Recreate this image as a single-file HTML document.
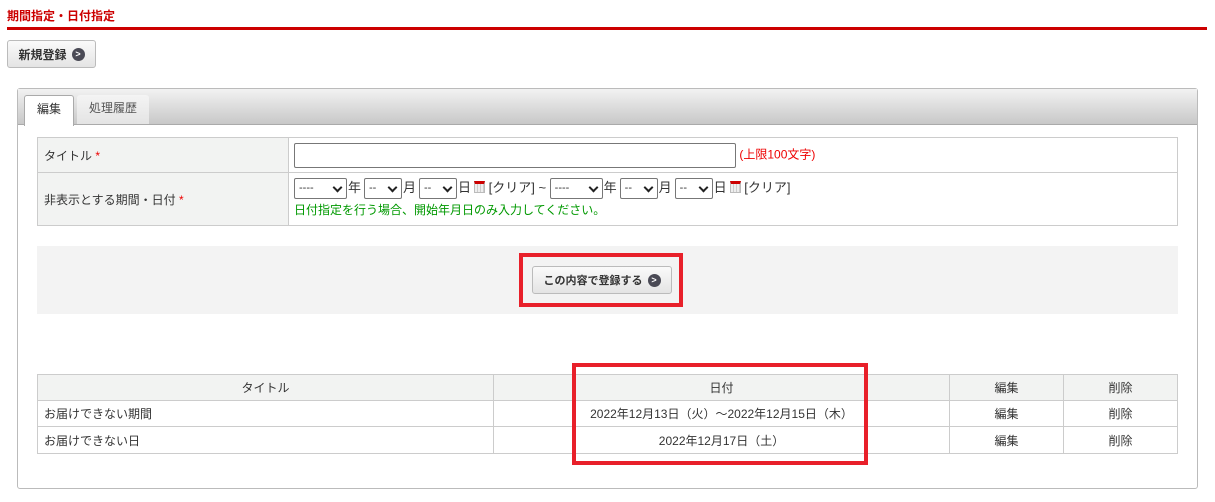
<!DOCTYPE html><html><head><meta charset="utf-8"><style>
body{margin:0;width:1215px;height:502px;background:#fff;font-family:"Liberation Sans","Noto Sans CJK JP",sans-serif;font-size:12px;color:#333;position:relative;overflow:hidden}
.a{position:absolute;box-sizing:border-box}
.btn{border:1px solid #bbb;border-radius:3px;background:linear-gradient(#fafafa,#e4e4e4);font-weight:bold;font-size:12px;color:#333;display:flex;align-items:center;justify-content:center;gap:5px}
.ic{width:13px;height:13px;border-radius:50%;background:#4a4a55;color:#fff;font-size:9px;line-height:13px;text-align:center}
table{border-collapse:collapse;position:absolute}
td{border:1px solid #ccc;padding:0 6px}
.sel{display:inline-block;box-sizing:border-box;height:21px;border:1px solid #777;border-radius:2px;vertical-align:middle;font-size:11px;line-height:19px;padding-left:4px;position:relative;background:#fff}
.sel:after{content:"";position:absolute;right:5px;top:5px;width:5px;height:5px;border-right:2px solid #222;border-bottom:2px solid #222;transform:rotate(45deg)}
.cal{display:inline-block;width:11px;height:12px;border:1px solid #bbb;border-top:3px solid #c00;box-sizing:border-box;background:repeating-linear-gradient(90deg,#eee 0 2px,#ccc 2px 3px);vertical-align:-1px}
.star{color:#e00}
.dt{font-size:13px}
.dt .sel{margin-right:1px}
.dt .u{display:inline-block;width:16px}
</style></head><body>
<div class="a" style="left:7px;top:7px;color:#c00;font-weight:bold;font-size:12px">期間指定・日付指定</div>
<div class="a" style="left:7px;top:27px;width:1200px;height:3px;background:#c00"></div>
<div class="a btn" style="left:7px;top:40px;width:89px;height:28px">新規登録 <span class="ic">&gt;</span></div>
<div class="a" style="left:17px;top:88px;width:1181px;height:401px;border:1px solid #bbb;border-radius:3px"></div>
<div class="a" style="left:18px;top:89px;width:1179px;height:36px;background:linear-gradient(#f2f2f2,#c8c8c8);border-bottom:1px solid #aaa"></div>
<div class="a" style="left:24px;top:95px;width:50px;height:31px;background:#fff;border:1px solid #aaa;border-bottom:none;border-radius:3px 3px 0 0;text-align:center;line-height:26px">編集</div>
<div class="a" style="left:77px;top:95px;width:72px;height:29px;background:linear-gradient(#f4f4f4,#e4e4e4);border-radius:3px 3px 0 0;text-align:center;line-height:26px;color:#555">処理履歴</div>
<table style="left:37px;top:137px;width:1141px">
<tr style="height:35px"><td style="width:238px;background:#f2f3f2">タイトル <span class="star">*</span></td><td style="padding-left:5px"><span style="display:inline-block;width:440px;height:23px;border:1px solid #777;border-radius:2px;vertical-align:middle"></span> <span style="color:#e00">(上限100文字)</span></td></tr>
<tr style="height:53px"><td style="background:#f2f3f2">非表示とする期間・日付 <span class="star">*</span></td><td class="dt" style="line-height:21px;padding-left:5px">
<span class="sel" style="width:53px">----</span><span class="u">年</span><span class="sel" style="width:38px">--</span><span class="u">月</span><span class="sel" style="width:38px">--</span><span class="u">日</span><span class="cal"></span> [クリア] ~ <span class="sel" style="width:53px">----</span><span class="u">年</span><span class="sel" style="width:38px">--</span><span class="u">月</span><span class="sel" style="width:38px">--</span><span class="u">日</span><span class="cal"></span> [クリア]<br><span style="color:#090;font-size:12px">日付指定を行う場合、開始年月日のみ入力してください。</span></td></tr></table>
<div class="a" style="left:37px;top:246px;width:1141px;height:68px;background:#f3f3f3"></div>
<div class="a btn" style="left:532px;top:266px;width:140px;height:28px;font-size:11px">この内容で登録する <span class="ic">&gt;</span></div>
<div class="a" style="left:519px;top:253px;width:164px;height:54px;border:4px solid #e8202a"></div>
<table style="left:37px;top:374px;width:1141px;text-align:center">
<tr style="height:26px;background:#f2f3f2"><td style="width:443px">タイトル</td><td style="width:443px">日付</td><td style="width:101px">編集</td><td>削除</td></tr>
<tr style="height:26px"><td style="text-align:left">お届けできない期間</td><td>2022年12月13日（火）～2022年12月15日（木）</td><td>編集</td><td>削除</td></tr>
<tr style="height:27px"><td style="text-align:left">お届けできない日</td><td>2022年12月17日（土）</td><td>編集</td><td>削除</td></tr></table>
<div class="a" style="left:572px;top:363px;width:296px;height:102px;border:4px solid #e8202a"></div>
</body></html>
